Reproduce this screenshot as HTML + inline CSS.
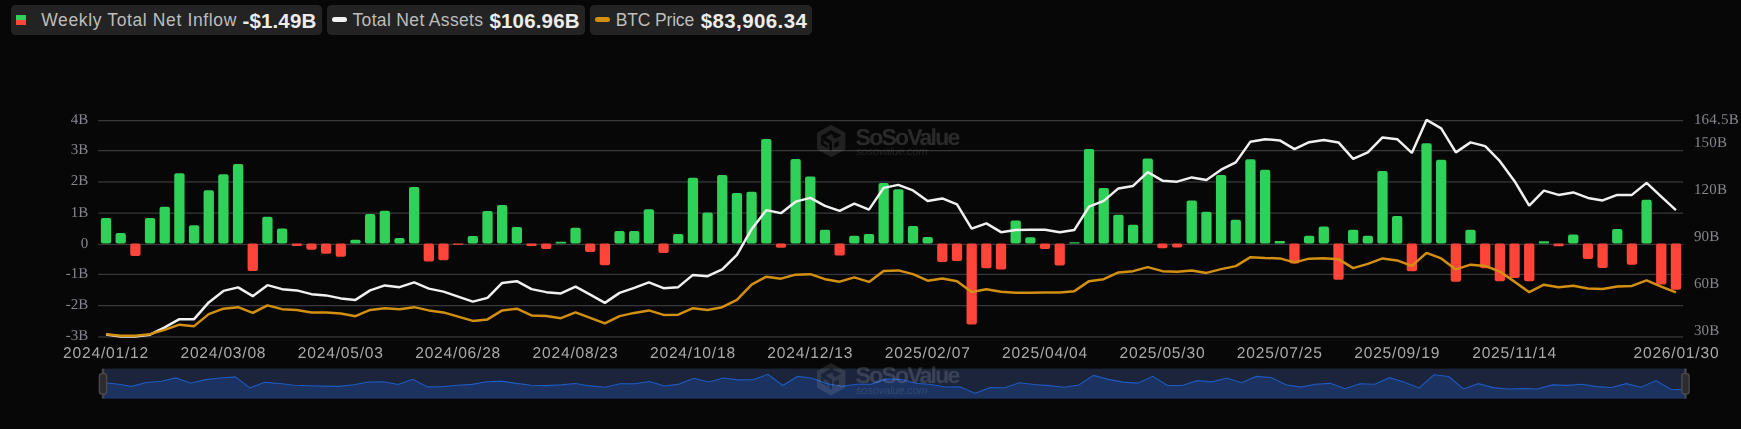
<!DOCTYPE html>
<html><head><meta charset="utf-8"><title>chart</title>
<style>
html,body{margin:0;padding:0;background:#070707;}
body{width:1741px;height:429px;overflow:hidden;position:relative;font-family:"Liberation Sans",sans-serif;}
svg{position:absolute;left:0;top:0;will-change:transform;}
svg text{text-rendering:geometricPrecision;}
.ys{font-family:"Liberation Serif",serif;font-size:15px;fill:#85858d;}
.xs{font-family:"Liberation Sans",sans-serif;font-size:15.6px;letter-spacing:0.78px;fill:#a9a9a9;}
.pill{position:absolute;top:5px;height:29.5px;background:#232323;border-radius:4.5px;}
.pill span{position:absolute;white-space:nowrap;line-height:20px;top:4.5px;}
.pill .t{color:#bdbdbd;font-size:17.5px;top:5px;}
.pill .v{color:#ececec;font-size:20.5px;font-weight:bold;top:5.76px;}
.yl{position:absolute;left:30px;width:58px;text-align:right;font-family:"Liberation Serif",serif;font-size:15px;line-height:20px;color:#85858d;}
.yr{position:absolute;left:1693.5px;text-align:left;font-family:"Liberation Serif",serif;font-size:15px;line-height:20px;color:#85858d;white-space:nowrap;}
.xl{position:absolute;top:342.3px;width:100px;text-align:center;font-size:15.8px;letter-spacing:0.63px;line-height:20px;color:#a9a9a9;white-space:nowrap;}
.wmt{position:absolute;font-weight:bold;font-size:23px;letter-spacing:-1.77px;line-height:24px;white-space:nowrap;}
.wms{position:absolute;font-style:italic;font-size:11px;line-height:12px;white-space:nowrap;letter-spacing:-0.15px;}
.yl,.yr,.xl,.wmt,.wms{will-change:transform;}
</style></head><body>
<div class="pill" style="left:11.3px;width:310.7px">
 <i style="position:absolute;left:4.7px;top:10px;width:10px;height:5px;background:#30d158"></i>
 <i style="position:absolute;left:4.7px;top:15px;width:10px;height:5px;background:#ff453a"></i>
 <span class="t" id="t1" style="letter-spacing:0.625px;left:30px">Weekly Total Net Inflow</span>
 <span class="v" id="v1" style="letter-spacing:0.136px;left:231.2px">-$1.49B</span>
</div>
<div class="pill" style="left:327px;width:258px">
 <i style="position:absolute;left:5px;top:12.2px;width:15px;height:5.2px;border-radius:2.6px;background:#f2f2f2"></i>
 <span class="t" id="t2" style="letter-spacing:0.335px;left:25.5px">Total Net Assets</span>
 <span class="v" id="v2" style="letter-spacing:0.155px;left:162.5px">$106.96B</span>
</div>
<div class="pill" style="left:590px;width:222px">
 <i style="position:absolute;left:5px;top:12.2px;width:15px;height:5.2px;border-radius:2.6px;background:#d38f10"></i>
 <span class="t" id="t3" style="letter-spacing:-0.154px;left:25.7px">BTC Price</span>
 <span class="v" id="v3" style="letter-spacing:0.405px;left:110.7px">$83,906.34</span>
</div>
<svg width="1741" height="429" viewBox="0 0 1741 429">
<rect x="98.2" y="120.00" width="1585" height="1.25" fill="#38383a"/>
<rect x="98.2" y="150.00" width="1585" height="1.25" fill="#38383a"/>
<rect x="98.2" y="181.30" width="1585" height="1.25" fill="#38383a"/>
<rect x="98.2" y="212.50" width="1585" height="1.25" fill="#38383a"/>
<rect x="98.2" y="243.80" width="1585" height="1.25" fill="#38383a"/>
<rect x="98.2" y="273.80" width="1585" height="1.25" fill="#38383a"/>
<rect x="98.2" y="305.00" width="1585" height="1.25" fill="#38383a"/>
<rect x="98.2" y="336.30" width="1585" height="1.25" fill="#38383a"/>
<rect x="100.89" y="218.00" width="10.3" height="25.50" rx="2.00" fill="#30d158"/>
<rect x="115.56" y="233.00" width="10.3" height="10.50" rx="2.00" fill="#30d158"/>
<rect x="130.23" y="243.50" width="10.3" height="12.50" rx="2.00" fill="#ff453a"/>
<rect x="144.90" y="218.00" width="10.3" height="25.50" rx="2.00" fill="#30d158"/>
<rect x="159.57" y="206.75" width="10.3" height="36.75" rx="2.00" fill="#30d158"/>
<rect x="174.25" y="173.25" width="10.3" height="70.25" rx="2.00" fill="#30d158"/>
<rect x="188.92" y="225.25" width="10.3" height="18.25" rx="2.00" fill="#30d158"/>
<rect x="203.59" y="190.25" width="10.3" height="53.25" rx="2.00" fill="#30d158"/>
<rect x="218.26" y="174.25" width="10.3" height="69.25" rx="2.00" fill="#30d158"/>
<rect x="232.93" y="164.00" width="10.3" height="79.50" rx="2.00" fill="#30d158"/>
<rect x="247.61" y="243.50" width="10.3" height="27.50" rx="2.00" fill="#ff453a"/>
<rect x="262.28" y="216.75" width="10.3" height="26.75" rx="2.00" fill="#30d158"/>
<rect x="276.95" y="228.50" width="10.3" height="15.00" rx="2.00" fill="#30d158"/>
<rect x="291.62" y="243.50" width="10.3" height="2.50" rx="1.25" fill="#ff453a"/>
<rect x="306.29" y="243.50" width="10.3" height="6.25" rx="2.00" fill="#ff453a"/>
<rect x="320.97" y="243.50" width="10.3" height="10.25" rx="2.00" fill="#ff453a"/>
<rect x="335.64" y="243.50" width="10.3" height="13.25" rx="2.00" fill="#ff453a"/>
<rect x="350.31" y="239.75" width="10.3" height="3.75" rx="1.62" fill="#30d158"/>
<rect x="364.98" y="214.00" width="10.3" height="29.50" rx="2.00" fill="#30d158"/>
<rect x="379.65" y="210.75" width="10.3" height="32.75" rx="2.00" fill="#30d158"/>
<rect x="394.33" y="238.00" width="10.3" height="5.50" rx="2.00" fill="#30d158"/>
<rect x="409.00" y="187.00" width="10.3" height="56.50" rx="2.00" fill="#30d158"/>
<rect x="423.67" y="243.50" width="10.3" height="18.00" rx="2.00" fill="#ff453a"/>
<rect x="438.34" y="243.50" width="10.3" height="16.75" rx="2.00" fill="#ff453a"/>
<rect x="453.01" y="243.50" width="10.3" height="1.25" rx="0.62" fill="#ff453a"/>
<rect x="467.69" y="236.00" width="10.3" height="7.50" rx="2.00" fill="#30d158"/>
<rect x="482.36" y="211.00" width="10.3" height="32.50" rx="2.00" fill="#30d158"/>
<rect x="497.03" y="205.00" width="10.3" height="38.50" rx="2.00" fill="#30d158"/>
<rect x="511.70" y="227.00" width="10.3" height="16.50" rx="2.00" fill="#30d158"/>
<rect x="526.37" y="243.50" width="10.3" height="2.50" rx="1.25" fill="#ff453a"/>
<rect x="541.05" y="243.50" width="10.3" height="5.50" rx="2.00" fill="#ff453a"/>
<rect x="555.72" y="241.75" width="10.3" height="1.75" rx="0.62" fill="#30d158"/>
<rect x="570.39" y="227.75" width="10.3" height="15.75" rx="2.00" fill="#30d158"/>
<rect x="585.06" y="243.50" width="10.3" height="8.50" rx="2.00" fill="#ff453a"/>
<rect x="599.73" y="243.50" width="10.3" height="21.75" rx="2.00" fill="#ff453a"/>
<rect x="614.41" y="231.00" width="10.3" height="12.50" rx="2.00" fill="#30d158"/>
<rect x="629.08" y="231.00" width="10.3" height="12.50" rx="2.00" fill="#30d158"/>
<rect x="643.75" y="209.25" width="10.3" height="34.25" rx="2.00" fill="#30d158"/>
<rect x="658.42" y="243.50" width="10.3" height="9.50" rx="2.00" fill="#ff453a"/>
<rect x="673.09" y="234.00" width="10.3" height="9.50" rx="2.00" fill="#30d158"/>
<rect x="687.77" y="177.75" width="10.3" height="65.75" rx="2.00" fill="#30d158"/>
<rect x="702.44" y="212.50" width="10.3" height="31.00" rx="2.00" fill="#30d158"/>
<rect x="717.11" y="175.00" width="10.3" height="68.50" rx="2.00" fill="#30d158"/>
<rect x="731.78" y="193.00" width="10.3" height="50.50" rx="2.00" fill="#30d158"/>
<rect x="746.45" y="191.75" width="10.3" height="51.75" rx="2.00" fill="#30d158"/>
<rect x="761.13" y="139.00" width="10.3" height="104.50" rx="2.00" fill="#30d158"/>
<rect x="775.80" y="243.50" width="10.3" height="4.25" rx="2.00" fill="#ff453a"/>
<rect x="790.47" y="159.00" width="10.3" height="84.50" rx="2.00" fill="#30d158"/>
<rect x="805.14" y="176.50" width="10.3" height="67.00" rx="2.00" fill="#30d158"/>
<rect x="819.81" y="229.75" width="10.3" height="13.75" rx="2.00" fill="#30d158"/>
<rect x="834.49" y="243.50" width="10.3" height="12.00" rx="2.00" fill="#ff453a"/>
<rect x="849.16" y="235.75" width="10.3" height="7.75" rx="2.00" fill="#30d158"/>
<rect x="863.83" y="234.00" width="10.3" height="9.50" rx="2.00" fill="#30d158"/>
<rect x="878.50" y="183.00" width="10.3" height="60.50" rx="2.00" fill="#30d158"/>
<rect x="893.17" y="189.25" width="10.3" height="54.25" rx="2.00" fill="#30d158"/>
<rect x="907.85" y="226.00" width="10.3" height="17.50" rx="2.00" fill="#30d158"/>
<rect x="922.52" y="237.00" width="10.3" height="6.50" rx="2.00" fill="#30d158"/>
<rect x="937.19" y="243.50" width="10.3" height="18.50" rx="2.00" fill="#ff453a"/>
<rect x="951.86" y="243.50" width="10.3" height="17.50" rx="2.00" fill="#ff453a"/>
<rect x="966.53" y="243.50" width="10.3" height="81.00" rx="2.00" fill="#ff453a"/>
<rect x="981.21" y="243.50" width="10.3" height="24.75" rx="2.00" fill="#ff453a"/>
<rect x="995.88" y="243.50" width="10.3" height="26.00" rx="2.00" fill="#ff453a"/>
<rect x="1010.55" y="220.50" width="10.3" height="23.00" rx="2.00" fill="#30d158"/>
<rect x="1025.22" y="237.25" width="10.3" height="6.25" rx="2.00" fill="#30d158"/>
<rect x="1039.89" y="243.50" width="10.3" height="5.50" rx="2.00" fill="#ff453a"/>
<rect x="1054.57" y="243.50" width="10.3" height="22.00" rx="2.00" fill="#ff453a"/>
<rect x="1069.24" y="242.25" width="10.3" height="1.25" rx="0.38" fill="#30d158"/>
<rect x="1083.91" y="149.00" width="10.3" height="94.50" rx="2.00" fill="#30d158"/>
<rect x="1098.58" y="188.00" width="10.3" height="55.50" rx="2.00" fill="#30d158"/>
<rect x="1113.25" y="214.75" width="10.3" height="28.75" rx="2.00" fill="#30d158"/>
<rect x="1127.93" y="224.75" width="10.3" height="18.75" rx="2.00" fill="#30d158"/>
<rect x="1142.60" y="158.50" width="10.3" height="85.00" rx="2.00" fill="#30d158"/>
<rect x="1157.27" y="243.50" width="10.3" height="4.75" rx="2.00" fill="#ff453a"/>
<rect x="1171.94" y="243.50" width="10.3" height="4.00" rx="2.00" fill="#ff453a"/>
<rect x="1186.61" y="200.50" width="10.3" height="43.00" rx="2.00" fill="#30d158"/>
<rect x="1201.29" y="211.75" width="10.3" height="31.75" rx="2.00" fill="#30d158"/>
<rect x="1215.96" y="175.00" width="10.3" height="68.50" rx="2.00" fill="#30d158"/>
<rect x="1230.63" y="219.75" width="10.3" height="23.75" rx="2.00" fill="#30d158"/>
<rect x="1245.30" y="159.25" width="10.3" height="84.25" rx="2.00" fill="#30d158"/>
<rect x="1259.97" y="169.75" width="10.3" height="73.75" rx="2.00" fill="#30d158"/>
<rect x="1274.65" y="241.00" width="10.3" height="2.50" rx="1.00" fill="#30d158"/>
<rect x="1289.32" y="243.50" width="10.3" height="20.00" rx="2.00" fill="#ff453a"/>
<rect x="1303.99" y="235.75" width="10.3" height="7.75" rx="2.00" fill="#30d158"/>
<rect x="1318.66" y="226.50" width="10.3" height="17.00" rx="2.00" fill="#30d158"/>
<rect x="1333.33" y="243.50" width="10.3" height="36.25" rx="2.00" fill="#ff453a"/>
<rect x="1348.01" y="229.75" width="10.3" height="13.75" rx="2.00" fill="#30d158"/>
<rect x="1362.68" y="235.75" width="10.3" height="7.75" rx="2.00" fill="#30d158"/>
<rect x="1377.35" y="171.00" width="10.3" height="72.50" rx="2.00" fill="#30d158"/>
<rect x="1392.02" y="216.00" width="10.3" height="27.50" rx="2.00" fill="#30d158"/>
<rect x="1406.69" y="243.50" width="10.3" height="27.75" rx="2.00" fill="#ff453a"/>
<rect x="1421.37" y="143.25" width="10.3" height="100.25" rx="2.00" fill="#30d158"/>
<rect x="1436.04" y="159.75" width="10.3" height="83.75" rx="2.00" fill="#30d158"/>
<rect x="1450.71" y="243.50" width="10.3" height="38.25" rx="2.00" fill="#ff453a"/>
<rect x="1465.38" y="229.75" width="10.3" height="13.75" rx="2.00" fill="#30d158"/>
<rect x="1480.05" y="243.50" width="10.3" height="24.75" rx="2.00" fill="#ff453a"/>
<rect x="1494.73" y="243.50" width="10.3" height="37.75" rx="2.00" fill="#ff453a"/>
<rect x="1509.40" y="243.50" width="10.3" height="34.50" rx="2.00" fill="#ff453a"/>
<rect x="1524.07" y="243.50" width="10.3" height="37.75" rx="2.00" fill="#ff453a"/>
<rect x="1538.74" y="241.25" width="10.3" height="2.25" rx="0.88" fill="#30d158"/>
<rect x="1553.41" y="243.50" width="10.3" height="2.75" rx="1.38" fill="#ff453a"/>
<rect x="1568.09" y="234.50" width="10.3" height="9.00" rx="2.00" fill="#30d158"/>
<rect x="1582.76" y="243.50" width="10.3" height="15.50" rx="2.00" fill="#ff453a"/>
<rect x="1597.43" y="243.50" width="10.3" height="24.50" rx="2.00" fill="#ff453a"/>
<rect x="1612.10" y="229.00" width="10.3" height="14.50" rx="2.00" fill="#30d158"/>
<rect x="1626.77" y="243.50" width="10.3" height="21.25" rx="2.00" fill="#ff453a"/>
<rect x="1641.45" y="199.75" width="10.3" height="43.75" rx="2.00" fill="#30d158"/>
<rect x="1656.12" y="243.50" width="10.3" height="41.00" rx="2.00" fill="#ff453a"/>
<rect x="1670.79" y="243.50" width="10.3" height="46.25" rx="2.00" fill="#ff453a"/>
<path d="M106.04 334.40 L120.71 336.40 L135.38 336.40 L150.05 334.65 L164.72 327.40 L179.40 319.15 L194.07 319.15 L208.74 302.40 L223.41 290.90 L238.08 287.40 L252.76 296.15 L267.43 285.15 L282.10 289.15 L296.77 290.40 L311.44 294.15 L326.12 295.40 L340.79 298.40 L355.46 299.90 L370.13 290.40 L384.80 285.40 L399.48 287.15 L414.15 282.40 L428.82 288.65 L443.49 291.65 L458.16 296.65 L472.84 301.65 L487.51 297.90 L502.18 282.90 L516.85 281.15 L531.52 289.15 L546.20 292.15 L560.87 293.40 L575.54 286.65 L590.21 294.65 L604.88 302.90 L619.56 292.90 L634.23 287.90 L648.90 282.40 L663.57 288.15 L678.24 287.15 L692.92 274.90 L707.59 276.15 L722.26 269.40 L736.93 254.90 L751.60 229.15 L766.28 210.15 L780.95 213.15 L795.62 201.65 L810.29 197.90 L824.96 205.90 L839.64 210.90 L854.31 203.65 L868.98 209.65 L883.65 187.90 L898.32 184.90 L913.00 190.40 L927.67 200.90 L942.34 198.40 L957.01 204.40 L971.68 228.65 L986.36 223.40 L1001.03 232.15 L1015.70 229.90 L1030.37 229.65 L1045.04 229.65 L1059.72 232.15 L1074.39 229.90 L1089.06 206.65 L1103.73 200.90 L1118.40 188.40 L1133.08 185.90 L1147.75 172.15 L1162.42 180.65 L1177.09 181.65 L1191.76 177.40 L1206.44 179.90 L1221.11 169.65 L1235.78 162.40 L1250.45 141.65 L1265.12 139.15 L1279.80 140.40 L1294.47 149.15 L1309.14 142.15 L1323.81 139.90 L1338.48 142.40 L1353.16 158.90 L1367.83 152.40 L1382.50 137.40 L1397.17 139.15 L1411.84 152.90 L1426.52 119.90 L1441.19 128.40 L1455.86 152.40 L1470.53 142.40 L1485.20 146.15 L1499.88 161.15 L1514.55 181.15 L1529.22 205.65 L1543.89 190.65 L1558.56 194.90 L1573.24 192.40 L1587.91 197.90 L1602.58 200.40 L1617.25 194.90 L1631.92 194.90 L1646.60 182.90 L1661.27 196.65 L1675.94 210.20" fill="none" stroke="#f0f0f0" stroke-width="2.5" stroke-linejoin="bevel" stroke-linecap="butt"/>
<path d="M106.04 334.15 L120.71 335.65 L135.38 335.65 L150.05 334.15 L164.72 329.90 L179.40 324.65 L194.07 326.15 L208.74 314.15 L223.41 308.65 L238.08 307.15 L252.76 312.90 L267.43 305.40 L282.10 309.15 L296.77 309.90 L311.44 312.40 L326.12 312.40 L340.79 313.40 L355.46 316.15 L370.13 309.90 L384.80 308.15 L399.48 309.15 L414.15 307.15 L428.82 310.40 L443.49 312.40 L458.16 316.65 L472.84 320.90 L487.51 319.40 L502.18 310.40 L516.85 308.65 L531.52 315.40 L546.20 315.90 L560.87 318.15 L575.54 312.40 L590.21 317.90 L604.88 323.40 L619.56 316.15 L634.23 312.90 L648.90 310.40 L663.57 314.90 L678.24 314.65 L692.92 308.15 L707.59 309.90 L722.26 307.15 L736.93 299.90 L751.60 284.65 L766.28 276.65 L780.95 278.65 L795.62 274.65 L810.29 274.15 L824.96 279.15 L839.64 281.65 L854.31 277.40 L868.98 281.90 L883.65 270.90 L898.32 270.40 L913.00 274.15 L927.67 280.65 L942.34 278.40 L957.01 281.15 L971.68 291.90 L986.36 289.15 L1001.03 291.65 L1015.70 292.65 L1030.37 292.65 L1045.04 292.40 L1059.72 292.40 L1074.39 291.15 L1089.06 281.15 L1103.73 279.15 L1118.40 272.40 L1133.08 271.15 L1147.75 267.15 L1162.42 271.15 L1177.09 271.65 L1191.76 270.40 L1206.44 272.90 L1221.11 269.15 L1235.78 266.15 L1250.45 257.15 L1265.12 257.90 L1279.80 258.40 L1294.47 262.40 L1309.14 258.65 L1323.81 258.15 L1338.48 259.15 L1353.16 268.15 L1367.83 263.90 L1382.50 258.40 L1397.17 260.40 L1411.84 265.90 L1426.52 252.90 L1441.19 258.40 L1455.86 269.40 L1470.53 264.65 L1485.20 265.90 L1499.88 271.65 L1514.55 281.65 L1529.22 292.15 L1543.89 284.65 L1558.56 287.15 L1573.24 285.65 L1587.91 288.40 L1602.58 288.90 L1617.25 286.40 L1631.92 285.90 L1646.60 280.40 L1661.27 286.65 L1675.94 292.40" fill="none" stroke="#d38f10" stroke-width="2.5" stroke-linejoin="bevel" stroke-linecap="butt"/>
<rect x="104" y="368.6" width="1581.5" height="30.0" fill="#1b243a"/>
<path d="M102.00 382.48 L116.80 384.02 L131.60 386.34 L146.40 382.48 L161.20 381.32 L176.00 377.87 L190.79 383.22 L205.59 379.62 L220.39 377.98 L235.19 376.92 L249.99 387.88 L264.79 382.35 L279.59 383.56 L294.39 385.31 L309.19 385.69 L323.99 386.10 L338.79 386.41 L353.58 384.72 L368.38 382.07 L383.18 381.73 L397.98 384.54 L412.78 379.29 L427.58 386.90 L442.38 386.77 L457.18 385.18 L471.98 384.33 L486.78 381.76 L501.57 381.14 L516.37 383.40 L531.17 385.31 L545.97 385.62 L560.77 384.92 L575.57 383.48 L590.37 385.92 L605.17 387.29 L619.97 383.82 L634.77 383.82 L649.57 381.58 L664.36 386.03 L679.16 384.12 L693.96 378.34 L708.76 381.91 L723.56 378.05 L738.36 379.91 L753.16 379.78 L767.96 374.35 L782.76 385.49 L797.56 376.41 L812.36 378.21 L827.15 383.69 L841.95 386.28 L856.75 384.30 L871.55 384.12 L886.35 378.88 L901.15 379.52 L915.95 383.30 L930.75 384.43 L945.55 386.95 L960.35 386.85 L975.14 393.38 L989.94 387.60 L1004.74 387.73 L1019.54 382.73 L1034.34 384.46 L1049.14 385.62 L1063.94 387.31 L1078.74 384.97 L1093.54 375.38 L1108.34 379.39 L1123.14 382.14 L1137.93 383.17 L1152.73 376.35 L1167.53 385.54 L1182.33 385.46 L1197.13 380.68 L1211.93 381.83 L1226.73 378.05 L1241.53 382.66 L1256.33 376.43 L1271.13 377.51 L1285.93 384.84 L1300.72 387.11 L1315.52 384.30 L1330.32 383.35 L1345.12 388.78 L1359.92 383.69 L1374.72 384.30 L1389.52 377.64 L1404.32 382.27 L1419.12 387.91 L1433.92 374.79 L1448.71 376.48 L1463.51 388.99 L1478.31 383.69 L1493.11 387.60 L1507.91 388.93 L1522.71 388.60 L1537.51 388.93 L1552.31 384.87 L1567.11 385.33 L1581.91 384.18 L1596.71 386.64 L1611.50 387.57 L1626.30 383.61 L1641.10 387.24 L1655.90 380.60 L1670.70 389.27 L1685.50 389.81 L1685.5 398.6 L104 398.6 Z" fill="#1c3261"/>
<path d="M102.00 382.48 L116.80 384.02 L131.60 386.34 L146.40 382.48 L161.20 381.32 L176.00 377.87 L190.79 383.22 L205.59 379.62 L220.39 377.98 L235.19 376.92 L249.99 387.88 L264.79 382.35 L279.59 383.56 L294.39 385.31 L309.19 385.69 L323.99 386.10 L338.79 386.41 L353.58 384.72 L368.38 382.07 L383.18 381.73 L397.98 384.54 L412.78 379.29 L427.58 386.90 L442.38 386.77 L457.18 385.18 L471.98 384.33 L486.78 381.76 L501.57 381.14 L516.37 383.40 L531.17 385.31 L545.97 385.62 L560.77 384.92 L575.57 383.48 L590.37 385.92 L605.17 387.29 L619.97 383.82 L634.77 383.82 L649.57 381.58 L664.36 386.03 L679.16 384.12 L693.96 378.34 L708.76 381.91 L723.56 378.05 L738.36 379.91 L753.16 379.78 L767.96 374.35 L782.76 385.49 L797.56 376.41 L812.36 378.21 L827.15 383.69 L841.95 386.28 L856.75 384.30 L871.55 384.12 L886.35 378.88 L901.15 379.52 L915.95 383.30 L930.75 384.43 L945.55 386.95 L960.35 386.85 L975.14 393.38 L989.94 387.60 L1004.74 387.73 L1019.54 382.73 L1034.34 384.46 L1049.14 385.62 L1063.94 387.31 L1078.74 384.97 L1093.54 375.38 L1108.34 379.39 L1123.14 382.14 L1137.93 383.17 L1152.73 376.35 L1167.53 385.54 L1182.33 385.46 L1197.13 380.68 L1211.93 381.83 L1226.73 378.05 L1241.53 382.66 L1256.33 376.43 L1271.13 377.51 L1285.93 384.84 L1300.72 387.11 L1315.52 384.30 L1330.32 383.35 L1345.12 388.78 L1359.92 383.69 L1374.72 384.30 L1389.52 377.64 L1404.32 382.27 L1419.12 387.91 L1433.92 374.79 L1448.71 376.48 L1463.51 388.99 L1478.31 383.69 L1493.11 387.60 L1507.91 388.93 L1522.71 388.60 L1537.51 388.93 L1552.31 384.87 L1567.11 385.33 L1581.91 384.18 L1596.71 386.64 L1611.50 387.57 L1626.30 383.61 L1641.10 387.24 L1655.90 380.60 L1670.70 389.27 L1685.50 389.81" fill="none" stroke="#1e5ac0" stroke-width="1.1"/>
<rect x="101.75" y="368.6" width="2.5" height="30.0" fill="#454547"/>
<rect x="99.4" y="373.6" width="7.2" height="20.4" rx="2.5" fill="#2c2c2e" stroke="#4a4a4c" stroke-width="1.4"/>
<rect x="1684.25" y="368.6" width="2.5" height="30.0" fill="#454547"/>
<rect x="1681.9" y="373.6" width="7.2" height="20.4" rx="2.5" fill="#2c2c2e" stroke="#4a4a4c" stroke-width="1.4"/>
<path d="M831.13 124.79 L845.40 132.79 L845.40 149.26 L831.13 157.26 L817.02 149.26 L817.02 132.79 Z M820.90 135.95 L831.03 129.94 L841.03 135.25 L841.03 135.67 L836.98 137.77 L831.03 134.34 L825.79 137.49 L831.03 140.64 L831.94 141.34 L831.94 151.48 L829.29 150.08 L829.29 143.43 L820.90 138.75 Z M833.83 135.95 L836.98 137.63 L835.23 138.61 L832.43 137.00 Z M820.90 138.19 L823.55 139.73 L823.55 143.22 L827.54 145.60 L827.54 148.26 L820.90 144.48 Z M834.32 143.22 L838.73 140.85 L838.73 145.74 L834.32 148.12 Z" fill="#fff" fill-opacity="0.105" fill-rule="evenodd"/>
<text x="855.6" y="144.70" font-family="Liberation Sans, sans-serif" font-weight="bold" font-size="23" letter-spacing="-1.77" fill="#fff" fill-opacity="0.14">SoSoValue</text>
<text x="856" y="155.20" font-family="Liberation Sans, sans-serif" font-style="italic" font-size="11" letter-spacing="-0.15" fill="#fff" fill-opacity="0.10">sosovalue.com</text>
<text x="855.6" y="383.00" font-family="Liberation Sans, sans-serif" font-weight="bold" font-size="23" letter-spacing="-1.77" fill="#fff" fill-opacity="0.14">SoSoValue</text>
<text x="856" y="393.50" font-family="Liberation Sans, sans-serif" font-style="italic" font-size="11" letter-spacing="-0.15" fill="#fff" fill-opacity="0.10">sosovalue.com</text>
<path d="M831.13 363.09 L845.40 371.09 L845.40 387.56 L831.13 395.56 L817.02 387.56 L817.02 371.09 Z M820.90 374.25 L831.03 368.24 L841.03 373.55 L841.03 373.97 L836.98 376.07 L831.03 372.64 L825.79 375.79 L831.03 378.94 L831.94 379.64 L831.94 389.78 L829.29 388.38 L829.29 381.73 L820.90 377.05 Z M833.83 374.25 L836.98 375.93 L835.23 376.91 L832.43 375.30 Z M820.90 376.49 L823.55 378.03 L823.55 381.52 L827.54 383.90 L827.54 386.56 L820.90 382.78 Z M834.32 381.52 L838.73 379.15 L838.73 384.04 L834.32 386.42 Z" fill="#fff" fill-opacity="0.105" fill-rule="evenodd"/>
<text class="ys" x="88.3" y="124.00" text-anchor="end">4B</text>
<text class="ys" x="88.3" y="154.00" text-anchor="end">3B</text>
<text class="ys" x="88.3" y="185.30" text-anchor="end">2B</text>
<text class="ys" x="88.3" y="216.50" text-anchor="end">1B</text>
<text class="ys" x="88.3" y="247.80" text-anchor="end">0</text>
<text class="ys" x="88.3" y="277.80" text-anchor="end">-1B</text>
<text class="ys" x="88.3" y="309.00" text-anchor="end">-2B</text>
<text class="ys" x="88.3" y="340.30" text-anchor="end">-3B</text>
<text class="ys" x="1693.9" y="124.20" letter-spacing="0.2">164.5B</text>
<text class="ys" x="1693.9" y="147.20" letter-spacing="0.2">150B</text>
<text class="ys" x="1693.9" y="194.20" letter-spacing="0.2">120B</text>
<text class="ys" x="1693.9" y="241.00" letter-spacing="0.2">90B</text>
<text class="ys" x="1693.9" y="288.00" letter-spacing="0.2">60B</text>
<text class="ys" x="1693.9" y="334.70" letter-spacing="0.2">30B</text>
<text class="xs" x="106.04" y="358.1" text-anchor="middle">2024/01/12</text>
<text class="xs" x="223.41" y="358.1" text-anchor="middle">2024/03/08</text>
<text class="xs" x="340.79" y="358.1" text-anchor="middle">2024/05/03</text>
<text class="xs" x="458.16" y="358.1" text-anchor="middle">2024/06/28</text>
<text class="xs" x="575.54" y="358.1" text-anchor="middle">2024/08/23</text>
<text class="xs" x="692.92" y="358.1" text-anchor="middle">2024/10/18</text>
<text class="xs" x="810.29" y="358.1" text-anchor="middle">2024/12/13</text>
<text class="xs" x="927.67" y="358.1" text-anchor="middle">2025/02/07</text>
<text class="xs" x="1045.04" y="358.1" text-anchor="middle">2025/04/04</text>
<text class="xs" x="1162.42" y="358.1" text-anchor="middle">2025/05/30</text>
<text class="xs" x="1279.80" y="358.1" text-anchor="middle">2025/07/25</text>
<text class="xs" x="1397.17" y="358.1" text-anchor="middle">2025/09/19</text>
<text class="xs" x="1514.55" y="358.1" text-anchor="middle">2025/11/14</text>
<text class="xs" x="1676.44" y="358.1" text-anchor="middle">2026/01/30</text>
</svg>

</body></html>
